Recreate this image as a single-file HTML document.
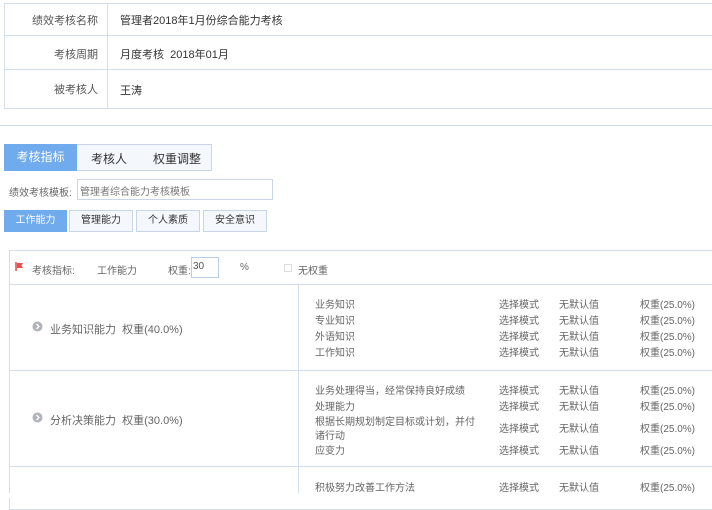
<!DOCTYPE html>
<html><head><meta charset="utf-8"><style>
*{margin:0;padding:0;box-sizing:border-box}
body{width:712px;height:498px;overflow:hidden;background:#fff;font-family:"Liberation Sans","Noto Sans CJK SC",sans-serif;color:#333;font-size:11px;position:relative}
.a{position:absolute;white-space:nowrap}
.top{position:absolute;left:4px;top:3px;width:720px;height:106px;border:1px solid #d5dfeb}
.hl{position:absolute;height:1px;background:#d5dfeb}
.vl{position:absolute;width:1px;background:#d5dfeb}
.lab{position:absolute;width:94px;text-align:right;color:#555}
.btn{position:absolute;height:22px;border:1px solid #c8d6e8;background:#f4f8fd;text-align:center;line-height:20px;color:#333}
.blue{background:#70abed;border-color:#70abed;color:#fff}
.g{color:#666}
</style></head><body>
<div class="top"></div>
<div class="hl" style="left:4px;top:35px;width:708px"></div>
<div class="hl" style="left:4px;top:69px;width:708px"></div>
<div class="vl" style="left:107px;top:3px;height:106px"></div>
<div class="lab" style="left:4px;top:12px">绩效考核名称</div>
<div class="lab" style="left:4px;top:46px">考核周期</div>
<div class="lab" style="left:4px;top:81px">被考核人</div>
<div class="a" style="left:120px;top:12px">管理者2018年1月份综合能力考核</div>
<div class="a" style="left:120px;top:46px">月度考核&nbsp; 2018年01月</div>
<div class="a" style="left:120px;top:82px">王涛</div>
<div class="hl" style="left:0;top:125px;width:712px;background:#cfd9e4"></div>

<div class="btn" style="left:4px;top:144px;width:208px;height:27px"></div>
<div class="btn blue" style="left:4px;top:144px;width:73px;height:27px;line-height:25px;font-size:12px">考核指标</div>
<div class="a" style="left:91px;top:150px;font-size:12px">考核人</div>
<div class="a" style="left:153px;top:150px;font-size:12px">权重调整</div>

<div class="a g" style="left:9px;top:184px;font-size:10px">绩效考核模板:</div>
<div class="a" style="left:77px;top:179px;width:196px;height:21px;border:1px solid #c8d6e8;padding:3px 2px;font-size:10px;color:#777">管理者综合能力考核模板</div>

<div class="btn blue" style="left:4px;top:210px;width:63px;font-size:10px">工作能力</div>
<div class="btn" style="left:69px;top:210px;width:64px;font-size:10px">管理能力</div>
<div class="btn" style="left:136px;top:210px;width:64px;font-size:10px">个人素质</div>
<div class="btn" style="left:203px;top:210px;width:64px;font-size:10px">安全意识</div>

<div class="a" style="left:9px;top:250px;width:710px;height:260px;border:1px solid #d5dfeb"></div>
<div class="hl" style="left:9px;top:284px;width:703px"></div>
<div class="hl" style="left:9px;top:370px;width:703px"></div>
<div class="hl" style="left:9px;top:466px;width:703px"></div>
<div class="vl" style="left:298px;top:284px;height:214px"></div>
<svg class="a" style="left:15px;top:262px" width="9" height="9"><path d="M1 0v9" stroke="#e04848" stroke-width="1.5"/><path d="M2 1h6l-1.5 2.5L8 6H2z" fill="#e85050"/></svg>
<div class="a g" style="left:32px;top:262px;font-size:10px">考核指标:</div>
<div class="a g" style="left:97px;top:262px;font-size:10px">工作能力</div>
<div class="a g" style="left:168px;top:262px;font-size:10px">权重:</div>
<div class="a" style="left:191px;top:257px;width:28px;height:21px;border:1px solid #b8cde6;padding:3px 1px;font-size:10px;color:#555">30</div>
<div class="a g" style="left:240px;top:262px;font-size:10px">%</div>
<div class="a" style="left:284px;top:264px;width:8px;height:8px;border:1px solid #ddd"></div>
<div class="a g" style="left:298px;top:262px;font-size:10px">无权重</div>

<svg class="a" style="left:32px;top:321px" width="11" height="11"><circle cx="5.5" cy="5.5" r="5" fill="#b0b4ba"/><path d="M4.5 3l2.5 2.5-2.5 2.5" stroke="#fff" fill="none" stroke-width="1.3"/></svg>
<div class="a g" style="left:50px;top:321px;font-size:11px">业务知识能力&nbsp; 权重(40.0%)</div>
<svg class="a" style="left:32px;top:412px" width="11" height="11"><circle cx="5.5" cy="5.5" r="5" fill="#b0b4ba"/><path d="M4.5 3l2.5 2.5-2.5 2.5" stroke="#fff" fill="none" stroke-width="1.3"/></svg>
<div class="a g" style="left:50px;top:412px;font-size:11px">分析决策能力&nbsp; 权重(30.0%)</div>

<div style="font-size:10px;color:#666">
<div class="a" style="left:315px;top:296px">业务知识</div><div class="a" style="left:499px;top:296px">选择模式</div><div class="a" style="left:559px;top:296px">无默认值</div><div class="a" style="left:640px;top:296px">权重(25.0%)</div>
<div class="a" style="left:315px;top:312px">专业知识</div><div class="a" style="left:499px;top:312px">选择模式</div><div class="a" style="left:559px;top:312px">无默认值</div><div class="a" style="left:640px;top:312px">权重(25.0%)</div>
<div class="a" style="left:315px;top:328px">外语知识</div><div class="a" style="left:499px;top:328px">选择模式</div><div class="a" style="left:559px;top:328px">无默认值</div><div class="a" style="left:640px;top:328px">权重(25.0%)</div>
<div class="a" style="left:315px;top:344px">工作知识</div><div class="a" style="left:499px;top:344px">选择模式</div><div class="a" style="left:559px;top:344px">无默认值</div><div class="a" style="left:640px;top:344px">权重(25.0%)</div>
<div class="a" style="left:315px;top:382px">业务处理得当，经常保持良好成绩</div><div class="a" style="left:499px;top:382px">选择模式</div><div class="a" style="left:559px;top:382px">无默认值</div><div class="a" style="left:640px;top:382px">权重(25.0%)</div>
<div class="a" style="left:315px;top:398px">处理能力</div><div class="a" style="left:499px;top:398px">选择模式</div><div class="a" style="left:559px;top:398px">无默认值</div><div class="a" style="left:640px;top:398px">权重(25.0%)</div>
<div class="a" style="left:315px;top:413px">根据长期规划制定目标或计划，并付</div><div class="a" style="left:315px;top:427px">诸行动</div><div class="a" style="left:499px;top:420px">选择模式</div><div class="a" style="left:559px;top:420px">无默认值</div><div class="a" style="left:640px;top:420px">权重(25.0%)</div>
<div class="a" style="left:315px;top:442px">应变力</div><div class="a" style="left:499px;top:442px">选择模式</div><div class="a" style="left:559px;top:442px">无默认值</div><div class="a" style="left:640px;top:442px">权重(25.0%)</div>
<div class="a" style="left:315px;top:479px">积极努力改善工作方法</div><div class="a" style="left:499px;top:479px">选择模式</div><div class="a" style="left:559px;top:479px">无默认值</div><div class="a" style="left:640px;top:479px">权重(25.0%)</div>
</div>
<div class="a" style="left:0;top:493px;width:712px;height:5px;background:#fff"></div>
</body></html>
